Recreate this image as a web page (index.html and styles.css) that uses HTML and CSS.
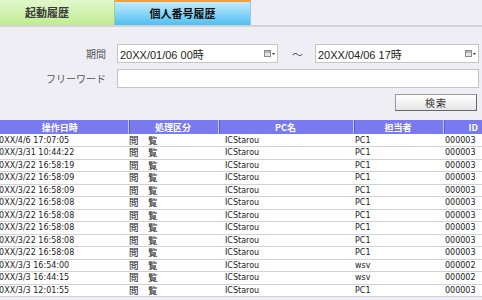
FILE: index.html
```html
<!DOCTYPE html>
<html lang="ja">
<head>
    <meta charset="UTF-8">
    <title>個人番号履歴</title>
    <link rel="stylesheet" href="styles.css">
</head>
<body>
    <!-- タブ -->
    <div class="tabs">
        <div class="tab tab-start">起動履歴</div>
        <div class="tab tab-active">個人番号履歴</div>
    </div>

    <!-- 検索条件 -->
    <div class="search">
        <label class="label">期間</label>
        <div class="field">
            <span>20XX/01/06 00時</span>
            <svg class="cal" width="11" height="9" viewBox="0 0 11 9"><rect x="0.5" y="1.5" width="6" height="6" fill="#e4e4e4" stroke="#8a8a8a"/><line x1="1" y1="3" x2="6" y2="3" stroke="#8a8a8a"/><path d="M8 4 L11 4 L9.5 6 Z" fill="#333"/></svg>
        </div>
        <div class="tilde">～</div>
        <div class="field">
            <span>20XX/04/06 17時</span>
            <svg class="cal" width="11" height="9" viewBox="0 0 11 9"><rect x="0.5" y="1.5" width="6" height="6" fill="#e4e4e4" stroke="#8a8a8a"/><line x1="1" y1="3" x2="6" y2="3" stroke="#8a8a8a"/><path d="M8 4 L11 4 L9.5 6 Z" fill="#333"/></svg>
        </div>

        <label class="label">フリーワード</label>
        <div class="field field-wide"></div>

        <div class="actions">
            <button class="btn">検索</button>
        </div>
    </div>

    <!-- 履歴一覧 -->
    <div class="list">
        <table class="grid">
            <colgroup>
                <col style="width:136px">
                <col style="width:90px">
                <col style="width:135px">
                <col style="width:90px">
                <col style="width:60px">
            </colgroup>
            <thead>
                <tr><th>操作日時</th><th>処理区分</th><th>PC名</th><th>担当者</th><th>ID</th></tr>
            </thead>
            <tbody>
                <tr><td>20XX/4/6 17:07:05</td><td class="kind">閲　覧</td><td class="pc">ICStarou</td><td>PC1</td><td>000003</td></tr>
                <tr><td>20XX/3/31 10:44:22</td><td class="kind">閲　覧</td><td class="pc">ICStarou</td><td>PC1</td><td>000003</td></tr>
                <tr><td>20XX/3/22 16:58:19</td><td class="kind">閲　覧</td><td class="pc">ICStarou</td><td>PC1</td><td>000003</td></tr>
                <tr><td>20XX/3/22 16:58:09</td><td class="kind">閲　覧</td><td class="pc">ICStarou</td><td>PC1</td><td>000003</td></tr>
                <tr><td>20XX/3/22 16:58:09</td><td class="kind">閲　覧</td><td class="pc">ICStarou</td><td>PC1</td><td>000003</td></tr>
                <tr><td>20XX/3/22 16:58:08</td><td class="kind">閲　覧</td><td class="pc">ICStarou</td><td>PC1</td><td>000003</td></tr>
                <tr><td>20XX/3/22 16:58:08</td><td class="kind">閲　覧</td><td class="pc">ICStarou</td><td>PC1</td><td>000003</td></tr>
                <tr><td>20XX/3/22 16:58:08</td><td class="kind">閲　覧</td><td class="pc">ICStarou</td><td>PC1</td><td>000003</td></tr>
                <tr><td>20XX/3/22 16:58:08</td><td class="kind">閲　覧</td><td class="pc">ICStarou</td><td>PC1</td><td>000003</td></tr>
                <tr><td>20XX/3/22 16:58:08</td><td class="kind">閲　覧</td><td class="pc">ICStarou</td><td>PC1</td><td>000003</td></tr>
                <tr><td>20XX/3/3 16:54:00</td><td class="kind">閲　覧</td><td class="pc">ICStarou</td><td>wsv</td><td>000002</td></tr>
                <tr><td>20XX/3/3 16:44:15</td><td class="kind">閲　覧</td><td class="pc">ICStarou</td><td>wsv</td><td>000002</td></tr>
                <tr><td>20XX/3/3 12:01:55</td><td class="kind">閲　覧</td><td class="pc">ICStarou</td><td>PC1</td><td>000003</td></tr>
            </tbody>
        </table>
    </div>
</body>
</html>
```

FILE: styles.css
```css
* {
    margin: 0;
    padding: 0;
    box-sizing: border-box;
}

body {
    font-family: "Liberation Sans", "Noto Sans CJK JP", sans-serif;
    background-color: #eeeef4;
    color: #222;
    width: 482px;
    overflow: hidden;
}

/* タブ */
.tabs {
    display: flex;
    height: 27px;
    border-bottom: 2px solid #d4d4d8;
}

.tab {
    height: 25px;
    font-size: 11px;
    font-weight: bold;
    line-height: 25px;
    font-family: "Noto Sans CJK JP", sans-serif;
}

.tab-start {
    width: 115px;
    padding-left: 25px;
    color: #3a3a3a;
    background: linear-gradient(#e2f8cc, #bfec92);
    border-right: 1px solid #a8d080;
}

.tab-active {
    width: 136px;
    text-align: center;
    color: #111;
    background: linear-gradient(#c4ecfc, #4fbff2);
    border-top: 2px solid #f0a040;
    line-height: 22px;
    border-right: 1px solid #9cc8dc;
}

/* 検索条件 */
.search {
    display: grid;
    grid-template-columns: 117px 161px 37px 164px;
    row-gap: 6px;
    margin-top: 17px;
    align-items: center;
}

.label {
    font-size: 10px;
    color: #555;
    text-align: right;
    padding-right: 11px;
    font-family: "Noto Sans CJK JP", sans-serif;
}

.field {
    height: 19px;
    background-color: #fff;
    border: 1px solid #c4c4c8;
    display: flex;
    align-items: center;
    justify-content: space-between;
    padding: 0 2px 0 2px;
    font-size: 11px;
    color: #222;
}

.field-wide {
    grid-column: 2 / 5;
}

.cal {
    display: block;
}

.tilde {
    text-align: center;
    font-size: 11px;
    color: #555;
    padding-left: 2px;
}

.actions {
    grid-column: 1 / 5;
    display: flex;
    justify-content: flex-end;
    padding-right: 2px;
}

.btn {
    width: 82px;
    height: 17px;
    font-size: 10px;
    font-family: "Noto Sans CJK JP", sans-serif;
    color: #333;
    letter-spacing: 1px;
    background: linear-gradient(#ffffff, #e6e6e6);
    border: 1px solid #9a9a9a;
    border-right-color: #666;
    border-bottom-color: #666;
    cursor: pointer;
}

/* 履歴一覧 */
.list {
    margin-top: 9px;
    overflow: hidden;
    width: 482px;
}

.grid {
    margin-left: -8px;
    width: 511px;
    table-layout: fixed;
    border-collapse: collapse;
    font-size: 8px;
    font-family: "DejaVu Sans", "Noto Sans CJK JP", sans-serif;
}

.grid th {
    height: 14px;
    background-color: #7a7af0;
    color: #fff;
    font-weight: bold;
    text-align: center;
    font-family: "Noto Sans CJK JP", sans-serif;
    font-size: 9px;
    border-left: 1px solid #c4c4fa;
    box-shadow: inset 1px 0 0 #5c5cd0;
}

.grid th:first-child {
    border-left: none;
    box-shadow: none;
}

.grid td {
    height: 12.5px;
    padding: 0 2px;
    background-color: #fff;
    border-bottom: 1px solid #d2d2d6;
    white-space: nowrap;
    color: #1a1a1a;
    line-height: 11px;
}

.grid td.kind {
    font-size: 9.5px;
    font-family: "Noto Sans CJK JP", sans-serif;
    padding-left: 1px;
}

.grid td.pc {
    padding-left: 7px;
}
```
